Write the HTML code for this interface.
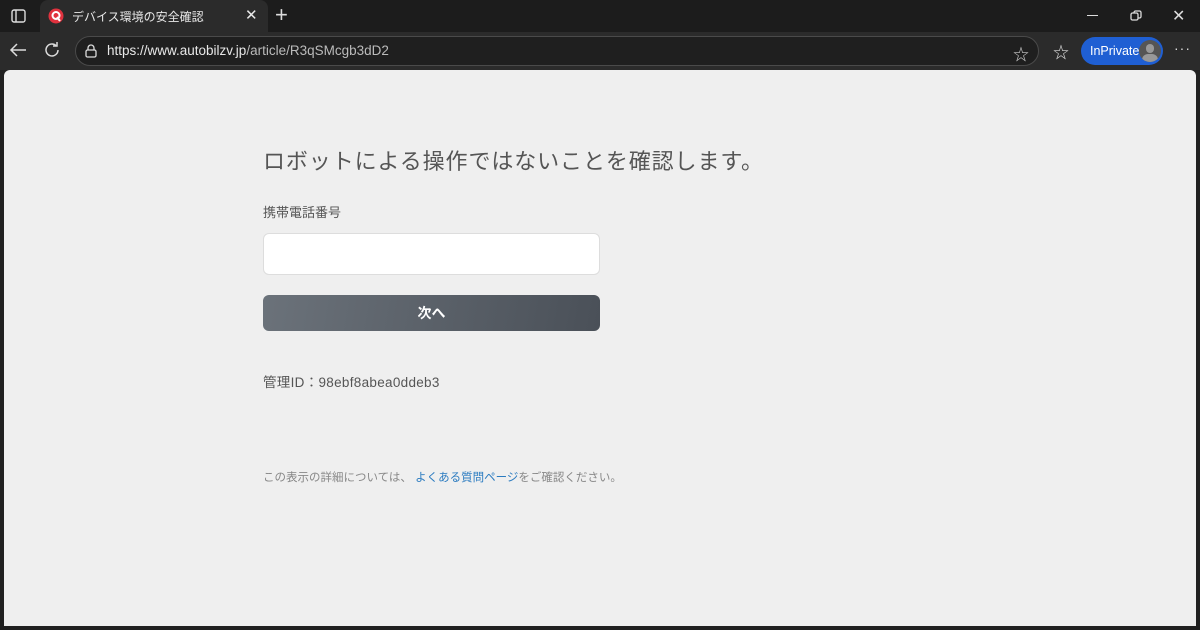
<!DOCTYPE html>
<html><head><meta charset="utf-8"><style>
*{margin:0;padding:0;box-sizing:border-box}
body{width:1200px;height:630px;background:#202020;font-family:"Liberation Sans","Noto Sans CJK JP",sans-serif;position:relative;overflow:hidden}
.tabbar{position:absolute;top:0;left:0;width:1200px;height:32px;background:#1c1c1c}
.tab{position:absolute;left:40px;top:0;width:228px;height:34px;background:#2b2b2b;border-radius:8px 8px 0 0;color:#e8e8e8;font-size:12px}
.toolbar{position:absolute;top:32px;left:0;width:1200px;height:38px;background:#2b2b2b}
.url{position:absolute;left:75px;top:4px;width:964px;height:30px;border:1px solid #4a4a4a;border-radius:15px;background:#1f1f1f;color:#e8e8e8;font-size:13.5px}
.content{position:absolute;left:4px;top:70px;width:1192px;height:556px;background:#efefef;border-radius:6px 6px 0 0}
.t{position:absolute;white-space:nowrap}
</style></head><body>
<div class="tabbar">
 <svg class="t" style="left:11px;top:9px" width="15" height="14"><rect x="1" y="1" width="13" height="12" rx="2" fill="none" stroke="#ddd" stroke-width="1.4"/><line x1="5" y1="1" x2="5" y2="13" stroke="#ddd" stroke-width="1.4"/></svg>
 <div class="tab">
  <svg class="t" style="left:8px;top:8px" width="16" height="16"><circle cx="8" cy="8" r="7.5" fill="#e0323e"/><circle cx="8" cy="7.5" r="3.5" fill="none" stroke="#fff" stroke-width="2"/><line x1="9" y1="9" x2="12" y2="13" stroke="#fff" stroke-width="2"/></svg>
  <span class="t" style="left:32px;top:8px">デバイス環境の安全確認</span>
  <span class="t" style="left:205px;top:6px;font-size:15px">✕</span>
 </div>
 <span class="t" style="left:275px;top:2px;color:#ddd;font-size:22px">+</span>
 <div class="t" style="left:1087px;top:15px;width:11px;height:1px;background:#ddd"></div>
 <svg class="t" style="left:1130px;top:10px" width="12" height="12"><rect x="1" y="3" width="7" height="7" rx="1.5" fill="none" stroke="#ddd" stroke-width="1.3"/><path d="M4 3V2.5A1.5 1.5 0 0 1 5.5 1H9.5A1.5 1.5 0 0 1 11 2.5V6.5A1.5 1.5 0 0 1 9.5 8H8" fill="none" stroke="#ddd" stroke-width="1.3"/></svg>
 <span class="t" style="left:1172px;top:6px;color:#ddd;font-size:16px">✕</span>
</div>
<div class="toolbar">
 <svg class="t" style="left:9px;top:10px" width="18" height="16"><path d="M17 8H2M8 2L2 8L8 14" fill="none" stroke="#ddd" stroke-width="1.5"/></svg>
 <svg class="t" style="left:43px;top:9px" width="18" height="18"><path d="M15 9A6 6 0 1 1 13 4.5" fill="none" stroke="#ddd" stroke-width="1.5"/><path d="M14 1V5H10" fill="none" stroke="#ddd" stroke-width="1.5"/></svg>
 <div class="url">
  <svg class="t" style="left:9px;top:7px" width="12" height="14"><path d="M3 6V4A3 3 0 0 1 9 4V6" fill="none" stroke="#ddd" stroke-width="1.3"/><rect x="1" y="6" width="10" height="7" rx="1.5" fill="none" stroke="#ddd" stroke-width="1.3"/></svg>
  <span class="t" style="left:31px;top:6px">https://www.autobilzv.jp<span style="color:#bbb">/article/R3qSMcgb3dD2</span></span>
  <span class="t" style="left:937px;top:4px;color:#ccc;font-size:16px">☆</span>
 </div>
 <span class="t" style="left:1053px;top:7px;color:#ddd;font-size:16px">☆</span>
 <div class="t" style="left:1081px;top:5px;width:82px;height:28px;border-radius:14px;background:#1f5fd3;color:#fff;font-size:12.5px;padding:7px 0 0 9px">InPrivate</div>
 <div class="t" style="left:1139px;top:8px;width:22px;height:22px;border-radius:11px;background:#555;overflow:hidden"><div style="position:absolute;left:7px;top:4px;width:8px;height:9px;border-radius:4px;background:#999"></div><div style="position:absolute;left:3px;top:14px;width:16px;height:12px;border-radius:8px;background:#999"></div></div>
 <span class="t" style="left:1174px;top:8px;color:#ddd;font-size:14px;letter-spacing:1px">···</span>
</div>
<div class="content">
 <div class="t" style="left:259px;top:74px;font-size:22px;color:#555;letter-spacing:0.9px">ロボットによる操作ではないことを確認します。</div>
 <div class="t" style="left:259px;top:132px;font-size:13px;color:#555">携帯電話番号</div>
 <div class="t" style="left:259px;top:163px;width:337px;height:42px;background:#fff;border:1px solid #ddd;border-radius:6px"></div>
 <div class="t" style="left:259px;top:225px;width:337px;height:36px;background:linear-gradient(100deg,#6b727a,#4a5058);border-radius:6px;color:#fff;font-size:14px;font-weight:bold;text-align:center;line-height:36px">次へ</div>
 <div class="t" style="left:259px;top:301px;font-size:13.5px;color:#555;letter-spacing:0.3px">管理ID：98ebf8abea0ddeb3</div>
 <div class="t" style="left:259px;top:399px;font-size:11.5px;color:#888">この表示の詳細については、 <span style="color:#2b7bc0">よくある質問ページ</span>をご確認ください。</div>
</div>
</body></html>
